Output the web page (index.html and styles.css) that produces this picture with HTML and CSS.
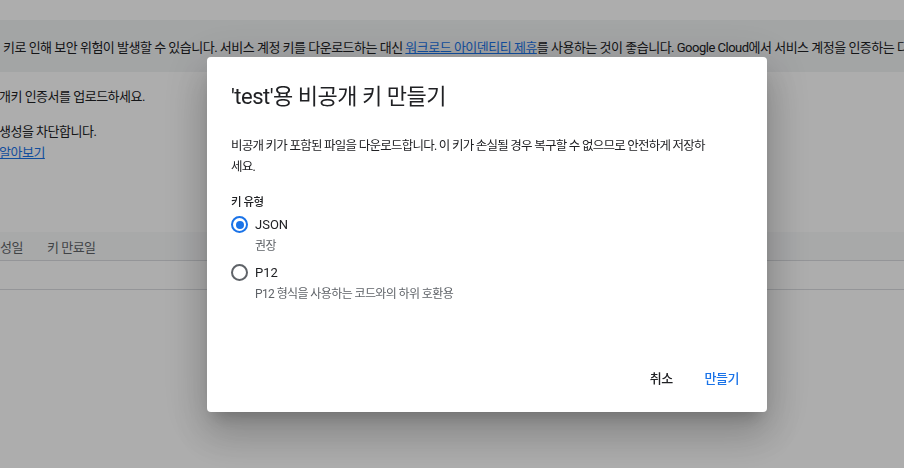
FILE: index.html
```html
<!DOCTYPE html>
<html lang="ko">
<head>
    <meta charset="UTF-8">
    <meta name="viewport" content="width=device-width, initial-scale=1.0">
    <title>비공개 키 만들기</title>
    <link rel="stylesheet" href="styles.css">
</head>
<body>
    <div class="page">
        <div class="topbar"></div>
        <div class="banner">
            <span class="banner-text">키로 인해 보안 위험이 발생할 수 있습니다. 서비스 계정 키를 다운로드하는 대신 <a href="#">워크로드 아이덴티티 제휴</a>를 사용하는 것이 좋습니다. Google Cloud에서 서비스 계정을 인증하는 다른 방법</span>
        </div>
        <div class="content">
            <p class="line first">개키 인증서를 업로드하세요.</p>
            <p class="line second">생성을 차단합니다.</p>
            <p class="line"><a href="#">알아보기</a></p>
        </div>
        <div class="table">
            <div class="table-head">
                <span class="col col-created">성일</span>
                <span class="col">키 만료일</span>
            </div>
            <div class="table-row"></div>
        </div>
    </div>

    <div class="scrim">
        <div class="dialog">
            <h2 class="dialog-title">'test'용 비공개 키 만들기</h2>
            <p class="dialog-text">비공개 키가 포함된 파일을 다운로드합니다. 이 키가 손실될 경우 복구할 수 없으므로 안전하게 저장하<br>세요.</p>

            <div class="field-label">키 유형</div>
            <label class="radio-row">
                <span class="radio checked"></span>
                <span class="radio-label">JSON</span>
            </label>
            <div class="radio-hint">권장</div>
            <label class="radio-row">
                <span class="radio"></span>
                <span class="radio-label">P12</span>
            </label>
            <div class="radio-hint">P12 형식을 사용하는 코드와의 하위 호환용</div>

            <div class="dialog-actions">
                <button class="btn btn-cancel">취소</button>
                <button class="btn btn-create">만들기</button>
            </div>
        </div>
    </div>
</body>
</html>
```
FILE: styles.css
```css
* {
    box-sizing: border-box;
}

html, body {
    margin: 0;
    height: 100%;
    overflow: hidden;
}

body {
    font-family: Roboto, "Noto Sans CJK KR", sans-serif;
    background: #fff;
    color: #3c4043;
}

a {
    color: #1a73e8;
    text-decoration: underline;
}

/* page behind the dialog */
.topbar {
    height: 20px;
}

.banner {
    height: 52px;
    background: #f1f3f4;
    display: flex;
    align-items: center;
    padding-left: 3px;
    white-space: nowrap;
    overflow: hidden;
    font-size: 13px;
    letter-spacing: -0.5px;
    color: #202124;
}

.content {
    margin-left: -1px;
    font-size: 13px;
    letter-spacing: -0.5px;
    color: #202124;
}

.line {
    margin: 0;
    line-height: 21px;
}

.line.first {
    margin-top: 14px;
}

.line.second {
    margin-top: 14px;
}

.table {
    margin-top: 69px;
}

.table-head {
    height: 29px;
    background: #f8f9fa;
    border-bottom: 1px solid #dadce0;
    display: flex;
    align-items: center;
    font-size: 13px;
    letter-spacing: -0.5px;
    color: #5f6368;
}

.col-created {
    width: 47px;
}

.table-row {
    height: 29px;
    border-bottom: 1px solid #dadce0;
}

/* dialog */
.scrim {
    position: fixed;
    inset: 0;
    background: rgba(0, 0, 0, 0.32);
    display: flex;
    align-items: center;
    justify-content: center;
    padding-left: 70px;
}

.dialog {
    width: 560px;
    height: 355px;
    background: #fff;
    border-radius: 4px;
    padding: 24px 20px 16px 24px;
    display: flex;
    flex-direction: column;
    box-shadow: 0 11px 15px -7px rgba(0, 0, 0, 0.2),
                0 24px 38px 3px rgba(0, 0, 0, 0.14),
                0 9px 46px 8px rgba(0, 0, 0, 0.12);
}

.dialog-title {
    margin: 0;
    font-size: 22px;
    font-weight: 400;
    line-height: 32px;
    letter-spacing: -0.5px;
    color: #202124;
}

.dialog-text {
    margin: 22px 0 0;
    font-size: 12.5px;
    line-height: 21px;
    letter-spacing: -0.75px;
    color: #202124;
}

.field-label {
    margin-top: 17px;
    font-size: 11.5px;
    line-height: 16px;
    font-weight: 500;
    letter-spacing: -0.5px;
    color: #202124;
}

.radio-row {
    display: flex;
    align-items: center;
    height: 24px;
    margin-top: 3px;
}

.radio {
    width: 17px;
    height: 17px;
    border: 2px solid #5f6368;
    border-radius: 50%;
    display: flex;
    align-items: center;
    justify-content: center;
    margin-right: 7px;
}

.radio.checked {
    border-color: #1a73e8;
}

.radio.checked::after {
    content: "";
    width: 8px;
    height: 8px;
    border-radius: 50%;
    background: #1a73e8;
}

.radio-label {
    font-size: 13px;
    color: #202124;
}

.radio-hint {
    margin-left: 24px;
    font-size: 12px;
    line-height: 16px;
    letter-spacing: -0.6px;
    color: #5f6368;
}

.radio-hint + .radio-row {
    margin-top: 7px;
}

.radio-row + .radio-hint {
    margin-top: 1px;
}

.dialog-actions {
    margin-top: auto;
    display: flex;
    justify-content: flex-end;
    gap: 16px;
}

.btn {
    height: 36px;
    padding: 0 8px;
    border: none;
    background: none;
    font-family: inherit;
    font-size: 13px;
    font-weight: 500;
    letter-spacing: -0.5px;
    cursor: pointer;
}

.btn-cancel {
    color: #202124;
}

.btn-create {
    color: #1a73e8;
}
```
